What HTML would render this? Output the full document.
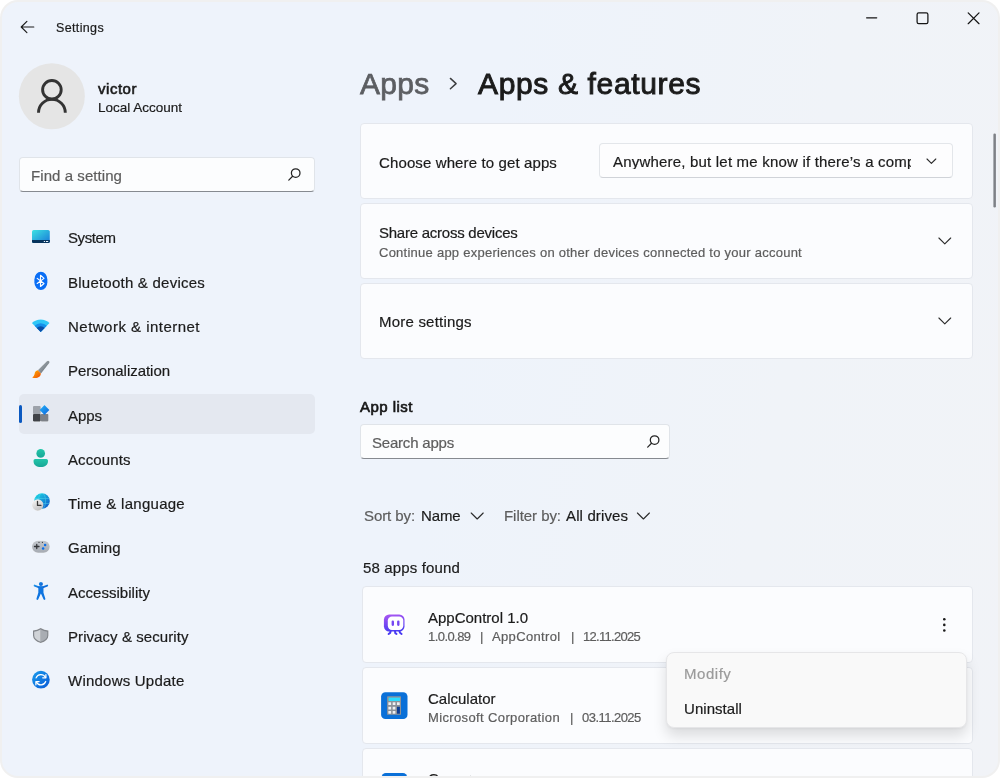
<!DOCTYPE html>
<html lang="en"><head><meta charset="utf-8"><title>Settings</title>
<style>
html,body{margin:0;padding:0;background:#fff}
body{width:1000px;height:778px;overflow:hidden;position:relative;font-family:'Liberation Sans',sans-serif}
#frame{position:absolute;left:0;top:0;width:1000px;height:778px;border-radius:18px;background:#f0f0f0}
#win{position:absolute;left:2px;top:2px;width:996px;height:774px;border-radius:16px;overflow:hidden;
 background:linear-gradient(100deg,#eef3fb 0%,#eef3fb 45%,#f0f3f8 75%,#f1f3f7 100%)}
#c{position:absolute;left:-2px;top:-2px;width:1000px;height:778px}
.t{position:absolute;white-space:pre;line-height:1;margin:0;will-change:transform}
.abs{position:absolute;box-sizing:border-box}
.card{position:absolute;box-sizing:border-box;background:#fbfcfe;border:1px solid #e4e7ed;border-radius:4px}
.input{position:absolute;box-sizing:border-box;background:#fcfdfe;border:1px solid #e0e4e9;border-bottom:1px solid #868a90;border-radius:4px}
svg{position:absolute;left:0;top:0;overflow:visible}
</style></head>
<body>
<div id="frame"></div>
<div id="win"><div id="c">

<!-- nav selection -->
<div class="abs" style="left:19px;top:394px;width:296px;height:40px;border-radius:5px;background:#e4e8f0"></div>
<div class="abs" style="left:19px;top:405px;width:3px;height:18px;border-radius:1.5px;background:#0b59c0"></div>

<!-- sidebar search -->
<div class="input" style="left:19px;top:157px;width:296px;height:35px"></div>

<!-- setting cards -->
<div class="card" style="left:360px;top:123px;width:613px;height:76px"></div>
<div class="card" style="left:360px;top:203px;width:613px;height:76px"></div>
<div class="card" style="left:360px;top:283px;width:613px;height:76px"></div>
<!-- dropdown -->
<div class="abs" style="left:599px;top:143px;width:354px;height:35px;background:#fdfdfe;border:1px solid #e3e6ea;border-bottom-color:#d0d3d8;border-radius:4px;overflow:hidden">
 <div class="t" style="left:12.5px;top:10.05px;width:298px;overflow:hidden;font-size:15px;color:#1b1b1b;-webkit-text-stroke:0.2px #1b1b1b;letter-spacing:0.197px;">Anywhere, but let me know if there’s a comparable app in the Microsoft Store</div>
</div>

<!-- app search -->
<div class="input" style="left:360px;top:424px;width:310px;height:35px"></div>

<!-- app cards -->
<div class="card" style="left:362px;top:586px;width:611px;height:77px"></div>
<div class="card" style="left:362px;top:667px;width:611px;height:77px"></div>
<div class="card" style="left:362px;top:748px;width:611px;height:76px"></div>

<!-- scrollbar -->


<div class="t" style="left:56.00px;top:22.42px;font-size:12.5px;color:#1b1b1b;letter-spacing:0.354px;-webkit-text-stroke:0.2px #1b1b1b;">Settings</div>
<div class="t" style="left:98.00px;top:81.30px;font-size:15px;color:#1b1b1b;letter-spacing:0.526px;-webkit-text-stroke:0.6px #1b1b1b;">victor</div>
<div class="t" style="left:98.00px;top:100.97px;font-size:13.5px;color:#1b1b1b;-webkit-text-stroke:0.2px #1b1b1b;">Local Account</div>
<div class="t" style="left:31.00px;top:167.80px;font-size:15px;color:#5d5d5d;letter-spacing:0.067px;-webkit-text-stroke:0.2px #5d5d5d;">Find a setting</div>
<div class="t" style="left:67.50px;top:230.30px;font-size:15px;color:#1b1b1b;letter-spacing:-0.419px;-webkit-text-stroke:0.2px #1b1b1b;">System</div>
<div class="t" style="left:67.50px;top:274.60px;font-size:15px;color:#1b1b1b;letter-spacing:0.232px;-webkit-text-stroke:0.2px #1b1b1b;">Bluetooth &amp; devices</div>
<div class="t" style="left:67.50px;top:318.90px;font-size:15px;color:#1b1b1b;letter-spacing:0.478px;-webkit-text-stroke:0.2px #1b1b1b;">Network &amp; internet</div>
<div class="t" style="left:67.50px;top:363.20px;font-size:15px;color:#1b1b1b;letter-spacing:-0.037px;-webkit-text-stroke:0.2px #1b1b1b;">Personalization</div>
<div class="t" style="left:67.50px;top:407.50px;font-size:15px;color:#1b1b1b;letter-spacing:-0.051px;-webkit-text-stroke:0.2px #1b1b1b;">Apps</div>
<div class="t" style="left:67.50px;top:451.80px;font-size:15px;color:#1b1b1b;letter-spacing:0.100px;-webkit-text-stroke:0.2px #1b1b1b;">Accounts</div>
<div class="t" style="left:67.50px;top:496.10px;font-size:15px;color:#1b1b1b;letter-spacing:0.276px;-webkit-text-stroke:0.2px #1b1b1b;">Time &amp; language</div>
<div class="t" style="left:67.50px;top:540.40px;font-size:15px;color:#1b1b1b;letter-spacing:-0.005px;-webkit-text-stroke:0.2px #1b1b1b;">Gaming</div>
<div class="t" style="left:67.50px;top:584.70px;font-size:15px;color:#1b1b1b;letter-spacing:0.024px;-webkit-text-stroke:0.2px #1b1b1b;">Accessibility</div>
<div class="t" style="left:67.50px;top:629.00px;font-size:15px;color:#1b1b1b;letter-spacing:0.072px;-webkit-text-stroke:0.2px #1b1b1b;">Privacy &amp; security</div>
<div class="t" style="left:67.50px;top:673.30px;font-size:15px;color:#1b1b1b;letter-spacing:0.222px;-webkit-text-stroke:0.2px #1b1b1b;">Windows Update</div>
<div class="t" style="left:359.80px;top:68.91px;font-size:30px;color:#5c5e62;letter-spacing:0.252px;-webkit-text-stroke:0.75px #5c5e62;">Apps</div>
<div class="t" style="left:477.50px;top:68.81px;font-size:30px;color:#1b1b1b;letter-spacing:0.649px;-webkit-text-stroke:0.95px #1b1b1b;">Apps &amp; features</div>
<div class="t" style="left:379.00px;top:154.80px;font-size:15px;color:#1b1b1b;letter-spacing:0.120px;-webkit-text-stroke:0.2px #1b1b1b;">Choose where to get apps</div>
<div class="t" style="left:379.00px;top:225.30px;font-size:15px;color:#1b1b1b;letter-spacing:-0.245px;-webkit-text-stroke:0.2px #1b1b1b;">Share across devices</div>
<div class="t" style="left:379.00px;top:245.75px;font-size:13px;color:#5d5d5d;letter-spacing:0.251px;-webkit-text-stroke:0.2px #5d5d5d;">Continue app experiences on other devices connected to your account</div>
<div class="t" style="left:379.00px;top:314.30px;font-size:15px;color:#1b1b1b;letter-spacing:0.208px;-webkit-text-stroke:0.2px #1b1b1b;">More settings</div>
<div class="t" style="left:360.20px;top:398.80px;font-size:15px;color:#161616;letter-spacing:0.450px;-webkit-text-stroke:0.65px #161616;">App list</div>
<div class="t" style="left:372.00px;top:435.30px;font-size:15px;color:#5d5d5d;letter-spacing:-0.203px;-webkit-text-stroke:0.2px #5d5d5d;">Search apps</div>
<div class="t" style="left:364.25px;top:508.10px;font-size:15px;color:#5d5d5d;letter-spacing:-0.086px;-webkit-text-stroke:0.2px #5d5d5d;">Sort by:</div>
<div class="t" style="left:421.25px;top:508.10px;font-size:15px;color:#1b1b1b;letter-spacing:-0.129px;-webkit-text-stroke:0.2px #1b1b1b;">Name</div>
<div class="t" style="left:504.00px;top:508.10px;font-size:15px;color:#5d5d5d;letter-spacing:-0.052px;-webkit-text-stroke:0.2px #5d5d5d;">Filter by:</div>
<div class="t" style="left:565.75px;top:508.10px;font-size:15px;color:#1b1b1b;letter-spacing:0.139px;-webkit-text-stroke:0.2px #1b1b1b;">All drives</div>
<div class="t" style="left:362.70px;top:560.10px;font-size:15px;color:#1b1b1b;letter-spacing:0.147px;-webkit-text-stroke:0.2px #1b1b1b;">58 apps found</div>
<div class="t" style="left:427.50px;top:609.80px;font-size:15px;color:#1b1b1b;letter-spacing:-0.006px;-webkit-text-stroke:0.2px #1b1b1b;">AppControl 1.0</div>
<div class="t" style="left:427.50px;top:630.00px;font-size:13px;color:#5d5d5d;letter-spacing:-0.562px;-webkit-text-stroke:0.2px #5d5d5d;">1.0.0.89</div>
<div class="t" style="left:480.00px;top:630.00px;font-size:13px;color:#5d5d5d;-webkit-text-stroke:0.2px #5d5d5d;">|</div>
<div class="t" style="left:492.00px;top:630.00px;font-size:13px;color:#5d5d5d;letter-spacing:0.345px;-webkit-text-stroke:0.2px #5d5d5d;">AppControl</div>
<div class="t" style="left:570.75px;top:630.00px;font-size:13px;color:#5d5d5d;-webkit-text-stroke:0.2px #5d5d5d;">|</div>
<div class="t" style="left:583.00px;top:630.00px;font-size:13px;color:#5d5d5d;letter-spacing:-0.711px;-webkit-text-stroke:0.2px #5d5d5d;">12.11.2025</div>
<div class="t" style="left:427.50px;top:691.05px;font-size:15px;color:#1b1b1b;-webkit-text-stroke:0.2px #1b1b1b;">Calculator</div>
<div class="t" style="left:427.50px;top:710.75px;font-size:13px;color:#5d5d5d;letter-spacing:0.368px;-webkit-text-stroke:0.2px #5d5d5d;">Microsoft Corporation</div>
<div class="t" style="left:569.50px;top:710.75px;font-size:13px;color:#5d5d5d;-webkit-text-stroke:0.2px #5d5d5d;">|</div>
<div class="t" style="left:582.00px;top:710.75px;font-size:13px;color:#5d5d5d;letter-spacing:-0.536px;-webkit-text-stroke:0.2px #5d5d5d;">03.11.2025</div>
<div class="t" style="left:427.80px;top:771.20px;font-size:15px;color:#1b1b1b;letter-spacing:-0.560px;-webkit-text-stroke:0.2px #1b1b1b;">Camera</div>

<svg width="1000" height="778" viewBox="0 0 1000 778">
<defs>
<linearGradient id="gSys" x1="0" y1="0" x2="1" y2="1"><stop offset="0" stop-color="#3ce2e2"/><stop offset="1" stop-color="#1878d8"/></linearGradient>
<linearGradient id="gDia" x1="0" y1="0" x2="1" y2="1"><stop offset="0" stop-color="#28b4f8"/><stop offset="1" stop-color="#0a62dc"/></linearGradient>
<linearGradient id="gAcc" x1="0" y1="0" x2="0" y2="1"><stop offset="0" stop-color="#22c6aa"/><stop offset="1" stop-color="#18a596"/></linearGradient>
<linearGradient id="gGlobe" x1="0" y1="0" x2="1" y2="1"><stop offset="0" stop-color="#1fe0e6"/><stop offset="1" stop-color="#0d4fc8"/></linearGradient>
<linearGradient id="gClock" x1="0" y1="0" x2="0.6" y2="1"><stop offset="0" stop-color="#fafafa"/><stop offset="1" stop-color="#c2c2c4"/></linearGradient>
<linearGradient id="gBr" x1="0" y1="0" x2="1" y2="1"><stop offset="0" stop-color="#ffb400"/><stop offset="1" stop-color="#ee4a08"/></linearGradient>
<linearGradient id="gHan" x1="0.2" y1="0.2" x2="0.8" y2="0.8"><stop offset="0" stop-color="#a0a8ae"/><stop offset="0.55" stop-color="#868e95"/><stop offset="1" stop-color="#59616a"/></linearGradient>
<linearGradient id="gUpd" x1="0" y1="0" x2="1" y2="1"><stop offset="0" stop-color="#1a9cec"/><stop offset="1" stop-color="#0858d6"/></linearGradient>
<linearGradient id="gA11" x1="0" y1="0" x2="1" y2="1"><stop offset="0" stop-color="#1a90e8"/><stop offset="1" stop-color="#0858d0"/></linearGradient>
<linearGradient id="gPad" x1="0" y1="0" x2="0" y2="1"><stop offset="0" stop-color="#c2c6cc"/><stop offset="1" stop-color="#a6abb3"/></linearGradient>
<linearGradient id="gAC" x1="0.3" y1="0" x2="0.5" y2="1"><stop offset="0" stop-color="#a656f2"/><stop offset="1" stop-color="#4a3cf2"/></linearGradient>
</defs>

<!-- scrollbar -->
<rect x="993.400" y="133.600" width="2.500" height="73.800" rx="1.250" fill="#7e8186"/>
<!-- back arrow -->
<path d="M33.8 27H21.3M26.9 21.3L21.2 27l5.7 5.7" fill="none" stroke="#1b1b1b" stroke-width="1.15" stroke-linecap="round" stroke-linejoin="round"/>
<!-- caption buttons -->
<rect x="866" y="17.150" width="11.300" height="1.250" rx=".6" fill="#151515"/>
<rect x="917.100" y="12.900" width="10.800" height="10.800" rx="1.600" fill="none" stroke="#151515" stroke-width="1.250"/>
<path d="M968.200 12.900l10.800 10.800M979 12.900l-10.800 10.800" fill="none" stroke="#151515" stroke-width="1.250" stroke-linecap="round"/>

<!-- avatar -->
<circle cx="51.85" cy="96.2" r="33" fill="#e5e5e5"/>
<circle cx="51.9" cy="89.75" r="9.3" fill="none" stroke="#333" stroke-width="2.9"/>
<path d="M38.5 112.8A13.4 13.4 0 0 1 65.3 112.8" fill="none" stroke="#333" stroke-width="2.9"/>

<!-- search glyphs -->
<g fill="none" stroke="#232323" stroke-width="1.250" stroke-linecap="round">
<circle cx="295.7" cy="173.1" r="4.3"/><path d="M292.6 176.3l-3.8 3.8"/>
<circle cx="654.6" cy="440.1" r="4.3"/><path d="M651.5 443.3l-3.8 3.8"/>
</g>

<!-- chevrons -->
<g fill="none" stroke="#2b2b2b" stroke-width="1.1" stroke-linecap="round" stroke-linejoin="round">
<path d="M450.400 78.400L456.100 83.600 450.400 88.800" stroke="#3c3d3f" stroke-width="1.450"/>
<path d="M927 159l4.400 4.300 4.400-4.300"/>
<path d="M938.900 238l5.900 5.800 5.900-5.800"/>
<path d="M938.900 318l5.900 5.800 5.900-5.800"/>
<path d="M471.2 513l6 6 6-6"/>
<path d="M637.4 513l6 6 6-6"/>
</g>

<!-- more dots -->
<g fill="#1b1b1b"><circle cx="944.3" cy="619.3" r="1.3"/><circle cx="944.3" cy="624.9" r="1.3"/><circle cx="944.3" cy="630.5" r="1.3"/></g>

<!-- NAV ICONS -->
<g style="filter:drop-shadow(0 0 .6px rgba(255,255,255,.95)) drop-shadow(0 0 .5px rgba(255,255,255,.8))">
<!-- System -->
<rect x="32" y="230" width="17.8" height="13" rx="1.6" fill="url(#gSys)"/>
<path d="M32 240h17.8v1.4a1.6 1.6 0 0 1-1.6 1.6H33.6a1.6 1.6 0 0 1-1.6-1.6z" fill="#07335c"/>
<rect x="43.8" y="241" width="1.3" height="1" fill="#e8f4ff"/><rect x="46" y="241" width="2.2" height="1" fill="#e8f4ff"/>
<!-- Bluetooth -->
<rect x="34.35" y="271.8" width="13.05" height="18.1" rx="6.5" ry="7.6" fill="#0a6ef5"/>
<path d="M37.2 278.4l6.8 5.1-3.5 3V275.2l3.5 3.2-6.8 5.1" fill="none" stroke="#fff" stroke-width="1.15" stroke-linejoin="round" stroke-linecap="round"/>
<!-- Network -->
<path d="M40.7 331.9L31.86 323.06A12.5 12.5 0 0 1 49.54 323.06Z" fill="#30c6f6"/>
<path d="M40.7 331.9L34.55 325.75A8.7 8.7 0 0 1 46.85 325.75Z" fill="#1690ea"/>
<path d="M40.7 331.9L36.74 327.94A5.6 5.6 0 0 1 44.66 327.94Z" fill="#0b4fa8"/>
<!-- Personalization -->
<path d="M46.9 361.2Q48.3 360.1 49.3 361.5 49.7 362.3 49.2 363.1L41 373.6 37.8 370.2Z" fill="url(#gHan)"/>
<path d="M37.8 370.3L40.9 373.5Q40.7 376.7 37.5 377.7 34.5 378.5 32.2 377.4 34.300 376.400 34.500 374.300 34.800 370.900 37.800 370.300Z" fill="url(#gBr)"/>
<!-- Apps -->
<rect x="33" y="406" width="7.7" height="8" rx=".8" fill="#9da2aa"/>
<rect x="33" y="414" width="7.7" height="7.4" rx=".8" fill="#3f4247"/>
<rect x="40.7" y="414" width="7.7" height="7.4" rx=".8" fill="#7c8087"/>
<path d="M44.5 405.1l4.9 4.9-4.9 4.9-4.9-4.9z" fill="url(#gDia)"/>
<!-- Accounts -->
<circle cx="40.7" cy="453.4" r="4.35" fill="url(#gAcc)"/>
<path d="M33.5 460.6a1.6 1.6 0 0 1 1.6-1.6h11.3a1.6 1.6 0 0 1 1.6 1.6v.6c0 3.6-3 5.9-7.25 5.9s-7.25-2.3-7.25-5.9z" fill="url(#gAcc)"/>
<!-- Time & language -->
<circle cx="42" cy="501" r="7.85" fill="url(#gGlobe)"/>
<g fill="none" stroke="#5fe6f0" stroke-width=".7" opacity=".55"><ellipse cx="42" cy="501" rx="3.6" ry="7.85"/><path d="M34.3 498.5h15.4M34.3 503.5h15.4"/></g>
<circle cx="37.7" cy="505" r="5.7" fill="url(#gClock)"/>
<path d="M37.5 501.3v4.1h3.4" fill="none" stroke="#3a3a3a" stroke-width="1.3" stroke-linecap="round" stroke-linejoin="round"/>
<!-- Gaming -->
<rect x="32" y="540.7" width="17.7" height="12" rx="6" fill="url(#gPad)"/>
<path d="M34.500 546.500h4.500M36.750 544.400v4.200" stroke="#34363a" stroke-width="1.300" stroke-linecap="round"/>
<circle cx="45.1" cy="545" r="1.25" fill="#0a6ee8"/><circle cx="43.1" cy="548.4" r="1.25" fill="#0a6ee8"/>
<circle cx="39" cy="542.3" r=".6" fill="#2e3033"/><circle cx="42.4" cy="542.3" r=".6" fill="#2e3033"/>
<!-- Accessibility -->
<circle cx="40.9" cy="584" r="2.05" fill="url(#gA11)"/>
<path d="M34.6 585.6l4.6 1.7h3.4l4.6-1.7" fill="none" stroke="url(#gA11)" stroke-width="1.9" stroke-linecap="round" stroke-linejoin="round"/>
<path d="M38.3 586.6h5.2v6.2l1.9 5.9a1 1 0 0 1-1.9.6l-2.6-5.9-2.6 5.9a1 1 0 0 1-1.9-.6l1.9-5.9z" fill="#0e74e0"/>
<!-- Privacy -->
<path d="M40.7 628q3.6 2.4 7.7 2.6v4.8q0 5-7.7 7.6-7.7-2.600-7.700-7.600v-4.800q4.100-.200 7.700-2.600z" fill="#83878d"/>
<path d="M40.700 629.400q-3.200 2-6.500 2.300v3.700q0 4 6.500 6.300z" fill="#d0d3d7"/>
<path d="M40.700 629.400q3.200 2 6.500 2.300v3.700q0 4-6.500 6.300z" fill="#a9adb3"/>
<!-- Windows Update -->
<circle cx="40.9" cy="679.7" r="8.85" fill="url(#gUpd)"/>
<g fill="none" stroke="#fff" stroke-width="1.25" stroke-linecap="round" stroke-linejoin="round">
<path d="M36.1 677.9A5.1 5.1 0 0 1 45.4 677.3"/><path d="M45.9 674.6v3.200h-3.200"/>
<path d="M45.700 681.500A5.100 5.100 0 0 1 36.400 682.100"/><path d="M35.900 684.800v-3.200h3.200"/>
</g>

</g>
<!-- APP ICONS -->
<!-- AppControl -->
<rect x="381.600" y="612.400" width="25" height="24" rx="5.500" fill="#fff"/>
<rect x="383.900" y="614.600" width="20.600" height="16.900" rx="5.200" fill="url(#gAC)"/>
<rect x="387.800" y="616.400" width="15.500" height="13.600" rx="4.200" fill="#fff"/>
<rect x="391.600" y="620.600" width="2.400" height="5.300" rx="1.100" fill="#7648f2"/>
<rect x="397.100" y="620.600" width="2.400" height="5.300" rx="1.100" fill="#7648f2"/>
<path d="M390.600 631l-.4 1.900-1.600 1.100M395 631l.3 2.200 1.200.8M399.400 631l.6 1.800 1.600 1.200" fill="none" stroke="#4a3cf2" stroke-width="2" stroke-linecap="round" stroke-linejoin="round"/>
<!-- Calculator -->
<rect x="381.100" y="692.300" width="26.400" height="26.700" rx="4.300" fill="#0a70d8"/>
<rect x="387.100" y="696.300" width="13.900" height="18.500" rx=".6" fill="#8d9299"/>
<rect x="388.600" y="697.600" width="11.400" height="3.400" fill="#2cdcff"/>
<g fill="#eef0f3"><rect x="388.400" y="702.300" width="2.700" height="2.700"/><rect x="392.700" y="702.300" width="2.700" height="2.700"/><rect x="397" y="702.300" width="2.700" height="2.700"/>
<rect x="388.400" y="706.800" width="2.700" height="2.700"/><rect x="392.700" y="706.800" width="2.700" height="2.700"/>
<rect x="388.400" y="711" width="2.700" height="2.700"/><rect x="392.700" y="711" width="2.700" height="2.700"/></g>
<rect x="397" y="706.800" width="2.900" height="6.900" fill="#0a3c94"/>
<!-- third app icon (clipped) -->
<rect x="381.600" y="773" width="25.600" height="26" rx="4.300" fill="#0a70d8"/>
</svg>

<!-- context menu -->
<div class="abs" style="left:666px;top:652px;width:300.500px;height:76px;border-radius:8px;background:#f9f9f9;border:1px solid #e6e6e8;box-shadow:0 8px 14px rgba(0,0,0,.13),0 1px 3px rgba(0,0,0,.05)"></div>
<div class="t" style="left:683.60px;top:665.80px;font-size:15px;color:#9b9b9b;letter-spacing:0.535px;-webkit-text-stroke:0.2px #9b9b9b;">Modify</div>
<div class="t" style="left:683.60px;top:700.90px;font-size:15px;color:#1b1b1b;letter-spacing:0.052px;-webkit-text-stroke:0.2px #1b1b1b;">Uninstall</div>

</div></div>
</body></html>
